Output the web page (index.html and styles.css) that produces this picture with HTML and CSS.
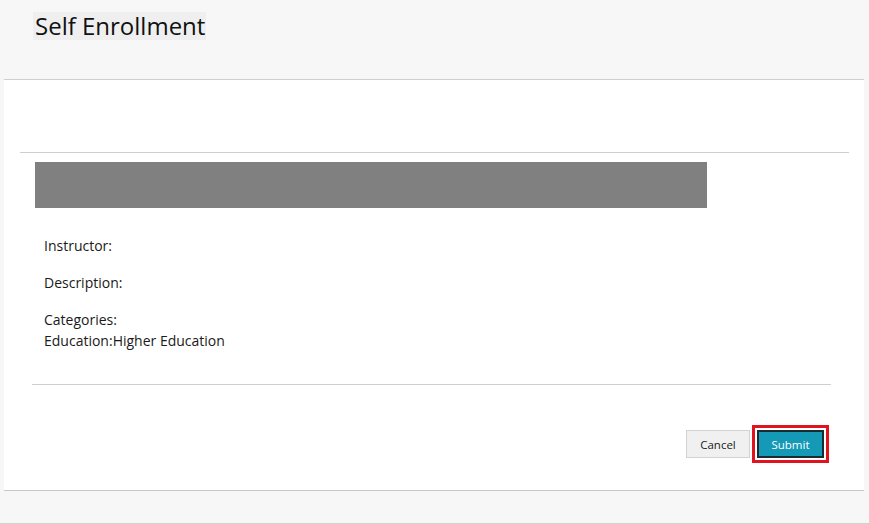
FILE: index.html
```html
<!DOCTYPE html>
<html>
<head>
<meta charset="utf-8">
<link rel="stylesheet" href="styles.css">
</head>
<body>
<div class="header">
  <h1 class="title">Self Enrollment</h1>
</div>
<div class="panel">
  <div class="spacer"></div>
  <div class="rule rule-top"></div>
  <div class="content">
    <div class="bar"></div>
    <div class="fields">
      <p class="field">Instructor:</p>
      <p class="field">Description:</p>
      <p class="field">Categories:<br>Education:Higher Education</p>
    </div>
  </div>
  <div class="rule rule-bottom"></div>
  <div class="actions">
    <button class="btn cancel">Cancel</button>
    <span class="highlight"><button class="btn submit">Submit</button></span>
  </div>
</div>
<div class="footer"></div>
</body>
</html>
```
FILE: styles.css
```css
html, body {
  margin: 0;
  padding: 0;
}
body {
  background: #f7f7f7;
  font-family: "Open Sans", "Noto Sans", sans-serif;
  color: #1a1a1a;
  width: 869px;
  height: 524px;
  overflow: hidden;
}
.header {
  height: 79px;
  padding: 12px 0 0 33px;
  box-sizing: border-box;
}
.title {
  display: inline-block;
  margin: 0;
  padding: 0 1px 0 2px;
  font-size: 24px;
  font-weight: 400;
  line-height: 28px;
  background: #efefef;
  color: #111;
}
.panel {
  margin: 0 5px 0 4px;
  background: #fff;
  border-top: 1px solid #cfcfcf;
  border-bottom: 1px solid #c8c8c8;
  height: 412px;
  box-sizing: border-box;
}
.spacer {
  height: 72px;
}
.rule {
  height: 1px;
  background: #cfcfcf;
}
.rule-top {
  margin: 0 15px 0 16px;
}
.content {
  padding: 9px 0 0 31px;
}
.bar {
  width: 672px;
  height: 46px;
  background: #808080;
}
.fields {
  padding: 27px 0 0 9px;
}
.field {
  margin: 0 0 16px 0;
  font-size: 14px;
  line-height: 21px;
  color: #1a1a1a;
}
.field:last-child {
  margin-bottom: 0;
}
.rule-bottom {
  margin: 33px 33px 0 28px;
}
.actions {
  display: flex;
  justify-content: flex-end;
  align-items: center;
  gap: 2px;
  padding: 40px 35px 0 0;
}
.btn {
  font-family: "Open Sans", "Noto Sans", sans-serif;
  font-size: 11.5px;
  height: 28px;
  padding: 0;
  cursor: pointer;
}
.cancel {
  width: 64px;
  background: #f0f0f0;
  border: 1px solid #d2d2d2;
  color: #222;
}
.highlight {
  display: inline-flex;
  border: 3px solid #e0141e;
  padding: 2px;
}
.submit {
  width: 67px;
  height: 28px;
  background: #1499b7;
  border: 2px solid #1c2b30;
  color: #fff;
}
.footer {
  height: 33px;
  border-bottom: 1px solid #d2d2d2;
  box-sizing: border-box;
}
```
